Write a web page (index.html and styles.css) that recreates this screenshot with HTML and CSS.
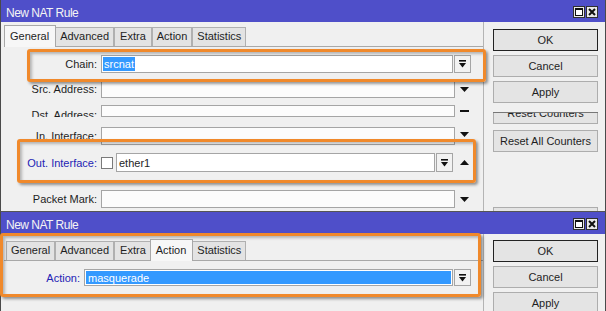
FILE: index.html
```html
<!DOCTYPE html>
<html>
<head>
<meta charset="utf-8">
<title>New NAT Rule</title>
<link rel="stylesheet" href="styles.css">
</head>
<body>
<div class="stage">

  <section class="win win-top">
    <header class="titlebar">
      <span class="title">New NAT Rule</span>
      <span class="tbtns">
        <span class="tbtn"><svg width="8" height="8" viewBox="0 0 8 8"><rect x="0.5" y="0.5" width="7" height="7" fill="#fff" stroke="#111"/><rect x="0" y="0" width="8" height="2" fill="#111"/></svg></span>
        <span class="tbtn"><svg width="8" height="8" viewBox="0 0 8 8"><path d="M1 1L7 7M7 1L1 7" stroke="#111" stroke-width="2"/></svg></span>
      </span>
    </header>
    <div class="wbody">
      <div class="panel">
        <div class="tabs">
          <span class="tab active">General</span>
          <span class="tab">Advanced</span>
          <span class="tab">Extra</span>
          <span class="tab">Action</span>
          <span class="tab">Statistics</span>
        </div>
        <div class="page">
          <div class="row r-chain">
            <span class="lbl">Chain:</span>
            <div class="field wide">
              <span class="inp"><span class="sel">srcnat</span></span>
              <span class="ddbtn"><svg width="7" height="8" viewBox="0 0 7 8"><rect x="0" y="0" width="7" height="1.6" fill="#111"/><path d="M0 3h7L3.5 7.5z" fill="#111"/></svg></span>
            </div>
          </div>
          <div class="row r-src">
            <span class="lbl">Src. Address:</span>
            <div class="field"><span class="inp"></span></div>
            <span class="slot"><svg width="9" height="5" viewBox="0 0 9 5"><path d="M0 0h9L4.5 5z" fill="#111"/></svg></span>
          </div>
          <div class="row r-dst">
            <span class="lbl cut">Dst. Address:</span>
            <div class="field"><span class="inp"></span></div>
            <span class="slot"><svg width="9" height="2" viewBox="0 0 9 2"><rect width="9" height="2" fill="#111"/></svg></span>
          </div>
          <div class="row r-in">
            <span class="lbl">In. Interface:</span>
            <div class="field"><span class="inp"></span></div>
            <span class="slot top"><svg width="9" height="5" viewBox="0 0 9 5"><path d="M0 0h9L4.5 5z" fill="#111"/></svg></span>
          </div>
          <div class="row r-out">
            <span class="lbl blue">Out. Interface:</span>
            <div class="field">
              <span class="chk"></span>
              <span class="inp">ether1</span>
              <span class="ddbtn"><svg width="7" height="8" viewBox="0 0 7 8"><rect x="0" y="0" width="7" height="1.6" fill="#111"/><path d="M0 3h7L3.5 7.5z" fill="#111"/></svg></span>
            </div>
            <span class="slot"><svg width="9" height="5" viewBox="0 0 9 5"><path d="M0 5h9L4.5 0z" fill="#111"/></svg></span>
          </div>
          <div class="row r-pm">
            <span class="lbl">Packet Mark:</span>
            <div class="field"><span class="inp"></span></div>
            <span class="slot"><svg width="9" height="5" viewBox="0 0 9 5"><path d="M0 0h9L4.5 5z" fill="#111"/></svg></span>
          </div>
        </div>
      </div>
      <div class="side">
        <span class="btn default b-first">OK</span>
        <span class="btn">Cancel</span>
        <span class="btn">Apply</span>
        <span class="btnclip"><span class="btn">Reset Counters</span></span>
        <span class="btn b-resetall">Reset All Counters</span>
        <span class="btn b-next"></span>
      </div>
    </div>
  </section>

  <section class="win win-bot">
    <header class="titlebar">
      <span class="title">New NAT Rule</span>
      <span class="tbtns">
        <span class="tbtn"><svg width="8" height="8" viewBox="0 0 8 8"><rect x="0.5" y="0.5" width="7" height="7" fill="#fff" stroke="#111"/><rect x="0" y="0" width="8" height="2" fill="#111"/></svg></span>
        <span class="tbtn"><svg width="8" height="8" viewBox="0 0 8 8"><path d="M1 1L7 7M7 1L1 7" stroke="#111" stroke-width="2"/></svg></span>
      </span>
    </header>
    <div class="wbody">
      <div class="panel">
        <div class="tabs tabs-low">
          <span class="tab">General</span>
          <span class="tab">Advanced</span>
          <span class="tab">Extra</span>
          <span class="tab active">Action</span>
          <span class="tab">Statistics</span>
        </div>
        <div class="page">
          <div class="row r-action">
            <span class="lbl blue short">Action:</span>
            <div class="field wide long">
              <span class="inp allsel">masquerade</span>
              <span class="ddbtn"><svg width="7" height="8" viewBox="0 0 7 8"><rect x="0" y="0" width="7" height="1.6" fill="#111"/><path d="M0 3h7L3.5 7.5z" fill="#111"/></svg></span>
            </div>
          </div>
        </div>
      </div>
      <div class="side side-low">
        <span class="btn default b-first">OK</span>
        <span class="btn">Cancel</span>
        <span class="btn">Apply</span>
      </div>
    </div>
  </section>

  <span class="hl hl-chain"></span>
  <span class="hl hl-out"></span>
  <span class="hl hl-action"></span>
</div>
</body>
</html>
```

FILE: styles.css
```css
* { box-sizing: border-box; }

html, body {
  margin: 0;
  padding: 0;
}

body {
  width: 606px;
  height: 311px;
  overflow: hidden;
  background: #f0f0f0;
  font-family: "Liberation Sans", Arial, sans-serif;
  font-size: 11px;
  color: #1e1e1e;
}

.stage {
  position: relative;
  width: 606px;
  height: 311px;
  overflow: hidden;
}

.win {
  background: #f0f0f0;
  overflow: hidden;
  border-left: 1px solid #4a4a4a;
  border-right: 1px solid #4a4a4a;
}

.win-top { height: 212px; border-bottom: 1px solid #555; }
.win-bot { height: 99px; }

.titlebar {
  height: 22px;
  background: #4f4fc9;
  display: flex;
  align-items: center;
  justify-content: space-between;
  padding: 0 7px 0 5px;
  color: #f4f4f4;
}

.title {
  font-size: 12px;
  letter-spacing: -0.5px;
  padding-top: 3px;
}

.tbtns {
  display: flex;
  gap: 1px;
  padding-top: 2px;
}

.tbtn {
  width: 12px;
  height: 12px;
  background: #e9e9e9;
  border: 1px solid #303030;
  display: flex;
  align-items: center;
  justify-content: center;
}

.wbody {
  display: flex;
  padding-left: 3px;
  height: 100%;
}

.panel {
  width: 480px;
  border-right: 1px solid #b4b4b4;
  flex: none;
}

.tabs {
  display: flex;
  align-items: flex-end;
  height: 25px;
  padding: 5px 0 0 2px;
  border-bottom: 1px solid #a8a8a8;
}

.tabs-low {
  height: 27px;
  padding-top: 7px;
}

.tab {
  height: 19px;
  line-height: 17px;
  padding: 0 4px;
  border: 1px solid #b0b0b0;
  border-bottom: none;
  margin-right: 0;
  background: #e3e3e3;
  color: #1e1e1e;
}

.tabs .tab:nth-child(3) { padding: 0 5px; }

.tab.active {
  position: relative;
  z-index: 1;
  height: 22px;
  line-height: 20px;
  padding: 0 6px 0 5px;
  margin: 0 -1px -1px -2px;
  background: #f7f7f7;
  border-color: #a8a8a8;
}

.page {
  display: flex;
  flex-direction: column;
}

.row {
  display: flex;
  align-items: center;
  height: 18px;
}

.r-chain { margin-top: 8px; }
.r-src { margin-top: 7px; }
.r-dst { margin-top: 7px; height: 12px; align-items: flex-start; }
.r-in { margin-top: 10px; }
.r-out { margin-top: 8px; height: 19px; }
.r-pm { margin-top: 18px; }
.r-action { margin-top: 8px; height: 17px; }

.lbl {
  width: 93px;
  margin-right: 4px;
  text-align: right;
  white-space: nowrap;
  flex: none;
}

.lbl.cut {
  height: 12px;
  overflow: hidden;
  line-height: 13px;
  padding-top: 4px;
}

.lbl.blue { color: #2323b4; }
.lbl.short { width: 76px; margin-right: 4px; }

.field {
  display: flex;
  width: 354px;
  height: 100%;
  flex: none;
}

.field.wide { width: 370px; }
.field.long { width: 387px; }

.inp {
  flex: 1;
  height: 100%;
  border: 1px solid #a5a5a5;
  background: #fcfcfc;
  padding: 0 2px;
  display: flex;
  align-items: center;
  white-space: nowrap;
  overflow: hidden;
}

.r-chain .inp { background: #fff; padding-left: 1px; }
.r-out .inp { background: #fff; }

.sel {
  background: #3399ff;
  color: #fff;
  line-height: 14px;
  padding: 0 1px;
}

.inp.allsel {
  background: #3399ff;
  color: #fff;
  box-shadow: inset 0 0 0 1px #fff;
  padding-left: 3px;
}

.ddbtn {
  width: 17px;
  height: 100%;
  border: 1px solid #a5a5a5;
  background: #f2f2f2;
  display: flex;
  align-items: center;
  justify-content: center;
  flex: none;
  margin-left: 1px;
}

.r-out .ddbtn { margin-right: 2px; }

.chk {
  width: 12px;
  height: 12px;
  border: 1px solid #7a7a7a;
  background: #fff;
  align-self: center;
  margin-right: 3px;
  flex: none;
}

.slot {
  width: 18px;
  height: 100%;
  display: flex;
  align-items: center;
  justify-content: center;
  flex: none;
}

.slot.top { align-items: flex-start; padding-top: 5px; }

.side {
  margin-left: 9px;
  width: 105px;
  display: flex;
  flex-direction: column;
  flex: none;
}

.btn {
  height: 22px;
  flex: none;
  border: 1px solid #adadad;
  background: #e4e4e4;
  display: flex;
  align-items: center;
  justify-content: center;
  margin-top: 4px;
  color: #1e1e1e;
  white-space: nowrap;
}

.btn.default { border-color: #222; }
.side .b-first { margin-top: 7px; }
.side-low .b-first { margin-top: 6px; }

.btnclip {
  height: 14px;
  overflow: hidden;
  margin-top: 9px;
  border-top: 1px solid #777;
  flex: none;
}

.btnclip .btn { margin-top: -11px; }

.side .b-resetall { margin-top: 4px; }
.side .b-next { margin-top: 55px; }

.hl {
  position: absolute;
  border: 3px solid #f0892b;
  border-radius: 3px;
  box-shadow: 2px 2px 3px rgba(0, 0, 0, 0.4), inset 2px 2px 3px rgba(0, 0, 0, 0.25);
  pointer-events: none;
}

.hl-chain { left: 27px; top: 49px; width: 459px; height: 33px; }
.hl-out { left: 17px; top: 139px; width: 459px; height: 44px; }
.hl-action { left: 0; top: 233px; width: 481px; height: 64px; }
```
